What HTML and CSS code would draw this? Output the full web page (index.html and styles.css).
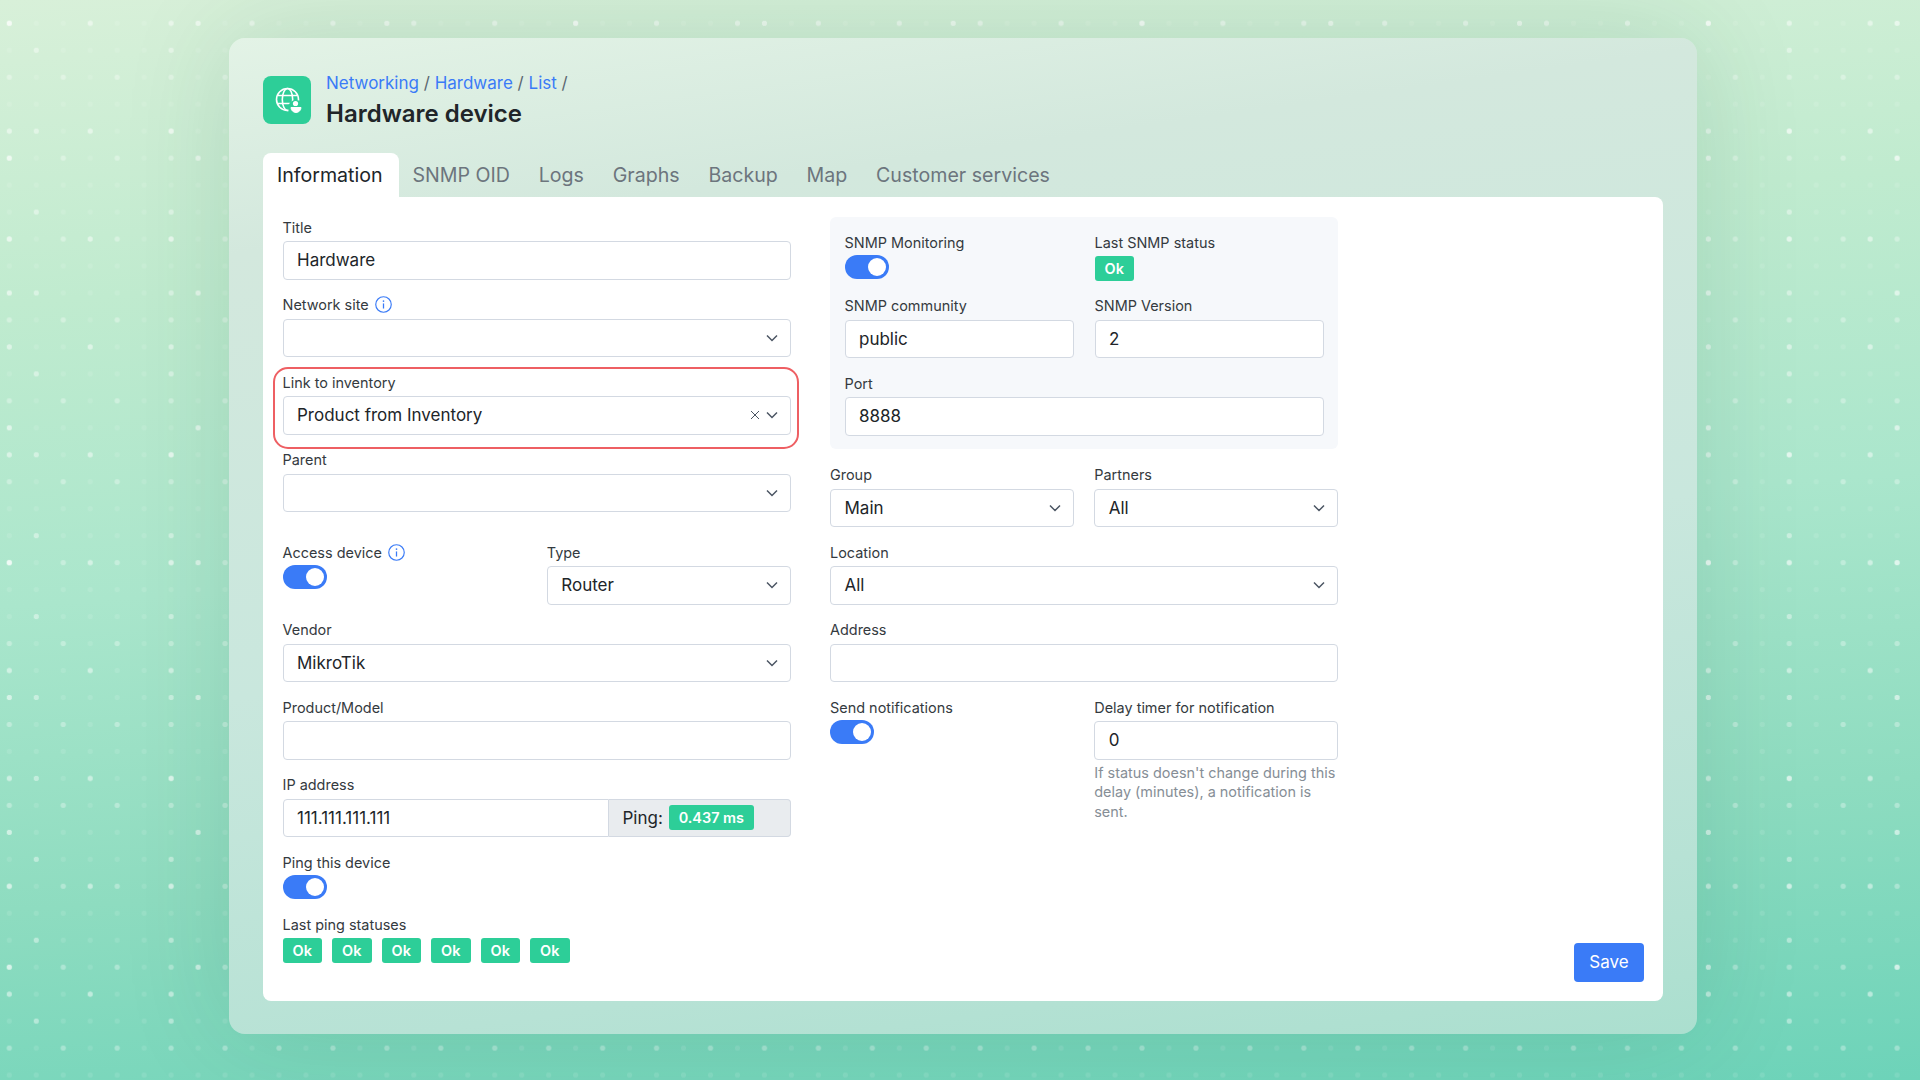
FILE: index.html
```html
<!DOCTYPE html>
<html lang="en">
<head>
    <meta charset="utf-8" />
    <title>Hardware device</title>
    <link rel="stylesheet" href="styles.css">
</head>
<body>
    <svg class="defs" width="0" height="0">
        <symbol id="chev" viewBox="0 0 12 12"><path d="M1 3.5l5 5 5-5" fill="none" stroke="#4b5563" stroke-width="1.5"/></symbol>
        <symbol id="info" viewBox="0 0 16 16">
            <circle cx="8" cy="8" r="7.3" fill="none" stroke="#3a7bf7" stroke-width="1.1"/>
            <circle cx="8" cy="4.8" r=".8" fill="#3a7bf7"/>
            <path d="M8 7v4.8" stroke="#3a7bf7" stroke-width="1.2"/>
        </symbol>
    </svg>

    <div class="panel">
        <div class="head">
            <div class="logo">
                <svg viewBox="0 0 30 30" width="30" height="30">
                    <g fill="none" stroke="#fff" stroke-width="1.6">
                        <circle cx="13.5" cy="13.5" r="11"/>
                        <ellipse cx="13.5" cy="13.5" rx="5.2" ry="11"/>
                        <path d="M3 9.5h21M3 17.5h21"/>
                    </g>
                    <circle cx="22" cy="22" r="8" fill="#2dce98"/>
                    <circle cx="21.5" cy="17.5" r="2.6" fill="#fff"/>
                    <path d="M17 21.5h10a5 5 0 0 1-10 0z" fill="#fff" stroke="#fff" stroke-width="1"/>
                </svg>
            </div>
            <div class="headText">
                <div class="crumbs"><a href="#">Networking</a> / <a href="#">Hardware</a> / <a href="#">List</a> /</div>
                <h1>Hardware device</h1>
            </div>
        </div>

        <div class="tabs">
            <a href="#" class="tab on">Information</a>
            <a href="#" class="tab">SNMP OID</a>
            <a href="#" class="tab">Logs</a>
            <a href="#" class="tab">Graphs</a>
            <a href="#" class="tab">Backup</a>
            <a href="#" class="tab">Map</a>
            <a href="#" class="tab">Customer services</a>
        </div>

        <div class="card">
            <div class="form">
                <div class="col left">
                    <div class="group">
                        <label>Title</label>
                        <input class="field" type="text" value="Hardware" />
                    </div>
                    <div class="group">
                        <label>Network site <svg class="ic"><use href="#info"/></svg></label>
                        <div class="field select"><span></span><svg class="chev"><use href="#chev"/></svg></div>
                    </div>
                    <div class="group marked">
                        <label>Link to inventory</label>
                        <div class="field select">
                            <span>Product from Inventory</span>
                            <svg class="clear" viewBox="0 0 10 10"><path d="M1 1l8 8M9 1l-8 8" stroke="#4b5563" stroke-width="1"/></svg>
                            <svg class="chev"><use href="#chev"/></svg>
                        </div>
                    </div>
                    <div class="group">
                        <label>Parent</label>
                        <div class="field select"><span></span><svg class="chev"><use href="#chev"/></svg></div>
                    </div>
                    <div class="row extra">
                        <div class="group">
                            <label>Access device <svg class="ic"><use href="#info"/></svg></label>
                            <div class="toggle"></div>
                        </div>
                        <div class="group">
                            <label>Type</label>
                            <div class="field select"><span>Router</span><svg class="chev"><use href="#chev"/></svg></div>
                        </div>
                    </div>
                    <div class="group">
                        <label>Vendor</label>
                        <div class="field select"><span>MikroTik</span><svg class="chev"><use href="#chev"/></svg></div>
                    </div>
                    <div class="group">
                        <label>Product/Model</label>
                        <input class="field" type="text" value="" />
                    </div>
                    <div class="group">
                        <label>IP address</label>
                        <div class="inputGroup">
                            <input class="field" type="text" value="111.111.111.111" />
                            <div class="addon">Ping: <span class="chip wide">0.437 ms</span></div>
                        </div>
                    </div>
                    <div class="group">
                        <label>Ping this device</label>
                        <div class="toggle"></div>
                    </div>
                    <div class="group">
                        <label>Last ping statuses</label>
                        <div class="chips">
                            <span class="chip">Ok</span>
                            <span class="chip">Ok</span>
                            <span class="chip">Ok</span>
                            <span class="chip">Ok</span>
                            <span class="chip">Ok</span>
                            <span class="chip">Ok</span>
                        </div>
                    </div>
                </div>

                <div class="col">
                    <div class="snmp">
                        <div class="row">
                            <div class="group">
                                <label>SNMP Monitoring</label>
                                <div class="toggle"></div>
                            </div>
                            <div class="group">
                                <label>Last SNMP status</label>
                                <div class="chips"><span class="chip">Ok</span></div>
                            </div>
                        </div>
                        <div class="row">
                            <div class="group">
                                <label>SNMP community</label>
                                <input class="field" type="text" value="public" />
                            </div>
                            <div class="group">
                                <label>SNMP Version</label>
                                <input class="field" type="text" value="2" />
                            </div>
                        </div>
                        <div class="group last">
                            <label>Port</label>
                            <input class="field" type="text" value="8888" />
                        </div>
                    </div>
                    <div class="row">
                        <div class="group">
                            <label>Group</label>
                            <div class="field select"><span>Main</span><svg class="chev"><use href="#chev"/></svg></div>
                        </div>
                        <div class="group">
                            <label>Partners</label>
                            <div class="field select"><span>All</span><svg class="chev"><use href="#chev"/></svg></div>
                        </div>
                    </div>
                    <div class="group">
                        <label>Location</label>
                        <div class="field select"><span>All</span><svg class="chev"><use href="#chev"/></svg></div>
                    </div>
                    <div class="group">
                        <label>Address</label>
                        <input class="field" type="text" value="" />
                    </div>
                    <div class="row">
                        <div class="group">
                            <label>Send notifications</label>
                            <div class="toggle"></div>
                        </div>
                        <div class="group">
                            <label>Delay timer for notification</label>
                            <input class="field" type="text" value="0" />
                            <div class="help">If status doesn't change during this delay (minutes), a notification is sent.</div>
                        </div>
                    </div>
                </div>
            </div>
            <a href="#" class="save">Save</a>
        </div>
    </div>
</body>
</html>
```

FILE: styles.css
```css
* {
    box-sizing: border-box
}

html,
body {
    height: 100%
}

body {
    margin: 0;
    padding: 38px 0 0 229px;
    overflow: hidden;
    font-family: Inter, "Liberation Sans", sans-serif;
    color: #212529;
    background-color: #a0e0c4;
    /* dots: several grids laid over each other so the brightness looks scattered */
    background-image:
        radial-gradient(circle, rgba(255, 255, 255, .5) 2.3px, transparent 3px),
        radial-gradient(circle, rgba(255, 255, 255, .42) 2.3px, transparent 3px),
        radial-gradient(circle, rgba(255, 255, 255, .34) 2.3px, transparent 3px),
        radial-gradient(circle, rgba(255, 255, 255, .24) 2.3px, transparent 3px),
        radial-gradient(circle, rgba(255, 255, 255, .1) 2.3px, transparent 3px),
        linear-gradient(176deg, #d8f0d9 0%, #c0ebcf 25%, #aae6cc 50%, #8edcc0 75%, #6dd3b9 100%);
    background-size: 188.79px 134.85px, 80.91px 107.88px, 134.85px 80.91px, 53.94px 80.91px, 26.97px 26.97px, 100% 100%;
    background-position: -85.1px -44.1px, -31.15px -30.64px, -31.13px 9.82px, -17.67px 36.79px, -4.2px 9.8px, 0 0;
}

.defs {
    position: absolute
}

a {
    text-decoration: none
}

.panel {
    width: 1468px;
    height: 996px;
    padding: 38px 34px 33px;
    border-radius: 16px;
    background: linear-gradient(172deg, #e3f3e6 0%, #d3e8dd 18%, #c9e7dd 55%, #b7e2d5 85%, #abdfcf 100%);
    box-shadow: 0 0 110px rgba(0, 70, 50, .13);
}

.head {
    display: flex;
    gap: 15px;
    height: 48px;
}

.logo {
    width: 48px;
    height: 48px;
    border-radius: 8px;
    background: #2dce98;
    display: flex;
    align-items: center;
    justify-content: center;
}

.logo svg {
    margin: 2px 0 0 3px
}

.headText {
    margin-top: -5px
}

.crumbs {
    font-size: 17px;
    line-height: 24px;
    color: #5b6770;
}

.crumbs a {
    color: #3a7bf7
}

h1 {
    margin: 1px 0 0;
    font-size: 24px;
    line-height: 36px;
    font-weight: 600;
}

.tabs {
    display: flex;
    margin-top: 29px;
    height: 44px;
}

.tab {
    padding: 1px 14.4px 0;
    font-size: 19.6px;
    line-height: 43px;
    color: #6c757d;
}

.tab.on {
    padding: 1px 16.5px 0 14px;
    margin-right: -1px;
    color: #212529;
    background: #fff;
    border-radius: 8px 8px 0 0;
}

.card {
    height: 804px;
    padding: 20px 19px 19px 19.5px;
    display: flex;
    justify-content: space-between;
    background: #fff;
    border-radius: 0 8px 8px 8px;
}

.form {
    display: grid;
    grid-template-columns: 508px 508px;
    gap: 39.5px;
    align-items: start;
}

.left {
    padding-top: .5px
}

.group {
    position: relative;
    margin-bottom: 15.5px;
}

.group.last {
    margin-bottom: 0
}

.marked::after {
    content: "";
    position: absolute;
    left: -10px;
    right: -8px;
    top: -6px;
    bottom: -14px;
    border: 2.5px solid #ee5f63;
    border-radius: 15px;
}

label {
    display: flex;
    align-items: center;
    gap: 6px;
    height: 19.5px;
    margin-bottom: 4px;
    font-size: 14.45px;
    line-height: 19.5px;
    color: #343a40;
}

.ic {
    width: 17px;
    height: 17px
}

.field {
    display: block;
    width: 100%;
    height: 38.5px;
    padding: 0 13.5px;
    border: 1px solid #d3d9e2;
    border-radius: 4px;
    background: #fff;
    font-family: inherit;
    font-size: 17px;
    color: #212529;
    outline: none;
}

.select {
    display: flex;
    align-items: center;
}

.select span {
    flex: 1
}

.chev {
    width: 12px;
    height: 12px;
    margin-right: -1.5px;
}

.clear {
    width: 10px;
    height: 10px;
    margin-right: 6px;
}

.row {
    display: grid;
    grid-template-columns: 1fr 1fr;
    column-gap: 20.5px;
}

.extra {
    padding-top: 15px
}

.toggle {
    position: relative;
    width: 44px;
    height: 24px;
    margin: -1px 0 1px;
    border-radius: 12px;
    background: #3a7bf7;
}

.toggle::after {
    content: "";
    position: absolute;
    top: 3px;
    right: 3px;
    width: 18px;
    height: 18px;
    border-radius: 50%;
    background: #fff;
}

.chips {
    display: flex;
    gap: 10px;
    margin-top: -.5px;
}

.chip {
    display: inline-block;
    width: 39.5px;
    height: 25px;
    border-radius: 3px;
    background: #2dce98;
    color: #fff;
    font-size: 14.45px;
    font-weight: 600;
    line-height: 25px;
    text-align: center;
}

.chip.wide {
    width: 85px;
    margin-left: 1px;
}

.inputGroup {
    display: flex
}

.inputGroup .field {
    width: 326px;
    border-radius: 4px 0 0 4px;
}

.addon {
    display: flex;
    align-items: center;
    gap: 5px;
    flex: 1;
    padding-left: 14px;
    height: 38.5px;
    border: 1px solid #d3d9e2;
    border-left: none;
    border-radius: 0 4px 4px 0;
    background: #e9ecef;
    font-size: 17px;
}

.snmp {
    padding: 15.5px 14px 13px 14.5px;
    margin-bottom: 16.5px;
    border-radius: 6px;
    background: #f6f8fb;
}

.help {
    margin-top: 3px;
    font-size: 14.45px;
    line-height: 19.5px;
    color: #868e96;
}

.save {
    align-self: flex-end;
    width: 70px;
    height: 39px;
    border-radius: 4px;
    background: #3a7bf7;
    color: #fff;
    font-size: 17px;
    line-height: 39px;
    text-align: center;
}
```
